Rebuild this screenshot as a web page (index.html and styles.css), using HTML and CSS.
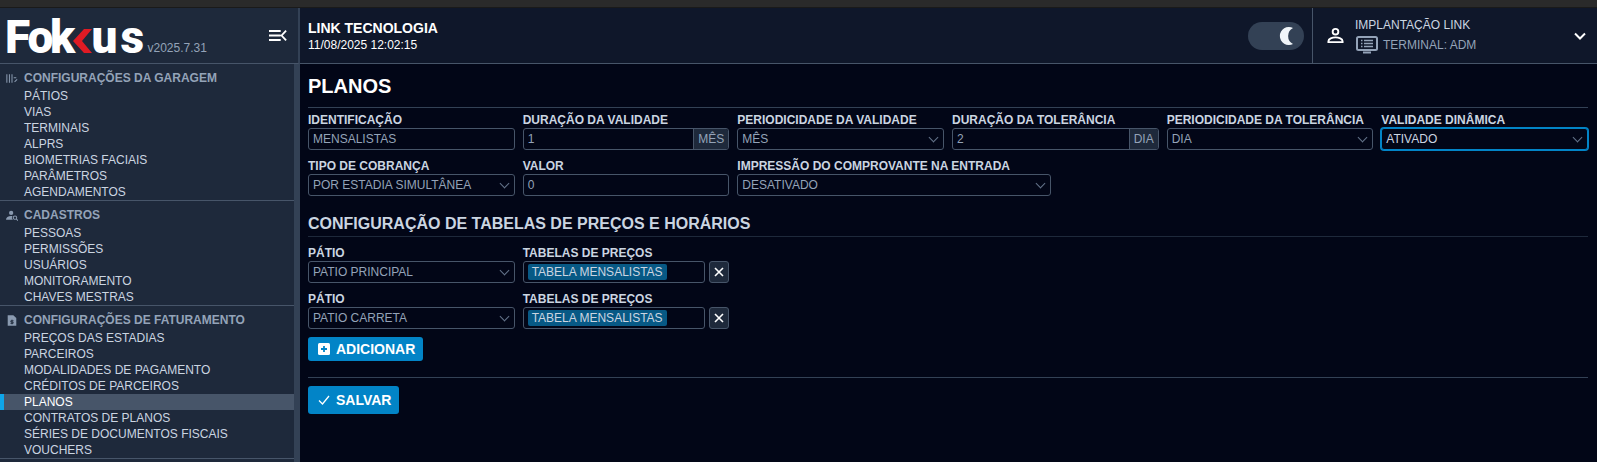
FILE: index.html
```html
<!DOCTYPE html>
<html lang="pt-BR">
<head>
  <meta charset="UTF-8" />
  <title>Fokus - Planos</title>
  <link rel="stylesheet" href="styles.css">
</head>
<body>
  <div class="browser-strip"></div>
  <div class="app">
    <!-- Sidebar -->
    <aside class="sidebar">
      <div class="brand">
        <div class="logo"><span class="logo-f">F</span><span class="logo-o">o</span><span class="logo-k">k</span><svg class="logo-chevron" viewBox="0 0 19 24"><path d="M19 0H11L0 12l11 12h8L9 12z" fill="#e01b24"/></svg><span class="logo-u">u</span><span class="logo-s">s</span></div>
        <span class="version">v2025.7.31</span>
        <svg class="menu-toggle" viewBox="0 0 20 14" fill="none" stroke="#fff" stroke-width="2"><path d="M0 2h13M0 7h13M0 12h13M19 1.500l-5 5.500 5 5.500"/></svg>
      </div>
      <nav class="menu">
        <div class="menu-group">
          <div class="menu-title">
            <svg viewBox="0 0 14 12" fill="none" stroke="#8a9ab0" stroke-width="1.200"><path d="M1 1v10M4 1v10M7 1v10M9 5h3M10 10l3-3"/></svg>
            CONFIGURAÇÕES DA GARAGEM
          </div>
          <a class="menu-item">PÁTIOS</a>
          <a class="menu-item">VIAS</a>
          <a class="menu-item">TERMINAIS</a>
          <a class="menu-item">ALPRS</a>
          <a class="menu-item">BIOMETRIAS FACIAIS</a>
          <a class="menu-item">PARÂMETROS</a>
          <a class="menu-item">AGENDAMENTOS</a>
        </div>
        <div class="menu-group">
          <div class="menu-title">
            <svg viewBox="0 0 14 12" fill="#8a9ab0"><circle cx="6" cy="3" r="2.500"/><path d="M0 11c0-3 2.500-4.500 6-4.500.6 0 1 0 1.500.1A3.500 3.500 0 0 0 8 11z"/><circle cx="10.500" cy="8.500" r="2" fill="none" stroke="#8a9ab0" stroke-width="1.200"/><path d="M12 10l2 2" stroke="#8a9ab0" stroke-width="1.200"/></svg>
            CADASTROS
          </div>
          <a class="menu-item">PESSOAS</a>
          <a class="menu-item">PERMISSÕES</a>
          <a class="menu-item">USUÁRIOS</a>
          <a class="menu-item">MONITORAMENTO</a>
          <a class="menu-item">CHAVES MESTRAS</a>
        </div>
        <div class="menu-group">
          <div class="menu-title">
            <svg viewBox="0 0 14 12" fill="#8a9ab0"><path d="M2 0H8.500L12 3v9H2z"/><path d="M7 5v5.500M8.800 6.300H5.700v1.500h2.600v1.500H5.200" fill="none" stroke="#1e293b"/></svg>
            CONFIGURAÇÕES DE FATURAMENTO
          </div>
          <a class="menu-item">PREÇOS DAS ESTADIAS</a>
          <a class="menu-item">PARCEIROS</a>
          <a class="menu-item">MODALIDADES DE PAGAMENTO</a>
          <a class="menu-item">CRÉDITOS DE PARCEIROS</a>
          <a class="menu-item active">PLANOS</a>
          <a class="menu-item">CONTRATOS DE PLANOS</a>
          <a class="menu-item">SÉRIES DE DOCUMENTOS FISCAIS</a>
          <a class="menu-item">VOUCHERS</a>
        </div>
      </nav>
    </aside>

    <div class="main">
      <!-- Top bar -->
      <header class="topbar">
        <div class="company">
          <strong>LINK TECNOLOGIA</strong>
          <span>11/08/2025 12:02:15</span>
        </div>
        <div class="theme-toggle">
          <svg viewBox="0 0 14 18"><path d="M14 1A9 9 0 1 0 14 17 9 9 0 0 1 14 1z" fill="#f1f5f9"/></svg>
        </div>
        <div class="user">
          <svg class="user-icon" viewBox="0 0 18 18" fill="none" stroke="#fff" stroke-width="2"><circle cx="9" cy="5" r="3"/><path d="M1.500 16v-1c0-2.500 4-4 7.500-4s7.500 1.500 7.500 4v1z"/></svg>
          <div class="user-info">
            <div class="user-name">IMPLANTAÇÃO LINK</div>
            <div class="user-terminal">
              <svg viewBox="0 0 22 18" fill="none" stroke="#94a3b8" stroke-width="2"><rect x="1" y="1" width="20" height="13" rx="1.500"/><path d="M5 4.500h1.500M8 4.500h9M5 7.500h1.500M8 7.500h9M5 10.500h1.500M8 10.500h9" stroke-width="1.300"/><path d="M7 16.500h8"/></svg>
              TERMINAL: ADM
            </div>
          </div>
          <svg class="user-caret" viewBox="0 0 12 8" fill="none" stroke="#fff" stroke-width="2"><path d="M1 1.500l5 5 5-5"/></svg>
        </div>
      </header>

      <main class="content">
        <h1>PLANOS</h1>
        <div class="form-grid">
          <div class="field">
            <label>IDENTIFICAÇÃO</label>
            <div class="control">MENSALISTAS</div>
          </div>
          <div class="field">
            <label>DURAÇÃO DA VALIDADE</label>
            <div class="control addon-group"><span class="value">1</span><span class="addon">MÊS</span></div>
          </div>
          <div class="field">
            <label>PERIODICIDADE DA VALIDADE</label>
            <div class="control select">MÊS</div>
          </div>
          <div class="field">
            <label>DURAÇÃO DA TOLERÂNCIA</label>
            <div class="control addon-group"><span class="value">2</span><span class="addon">DIA</span></div>
          </div>
          <div class="field">
            <label>PERIODICIDADE DA TOLERÂNCIA</label>
            <div class="control select">DIA</div>
          </div>
          <div class="field">
            <label>VALIDADE DINÂMICA</label>
            <div class="control select focused">ATIVADO</div>
          </div>
          <div class="field">
            <label>TIPO DE COBRANÇA</label>
            <div class="control select">POR ESTADIA SIMULTÂNEA</div>
          </div>
          <div class="field">
            <label>VALOR</label>
            <div class="control">0</div>
          </div>
          <div class="field span-3">
            <label>IMPRESSÃO DO COMPROVANTE NA ENTRADA</label>
            <div class="control select">DESATIVADO</div>
          </div>
        </div>

        <h2>CONFIGURAÇÃO DE TABELAS DE PREÇOS E HORÁRIOS</h2>
        <div class="form-grid">
          <div class="field">
            <label>PÁTIO</label>
            <div class="control select">PATIO PRINCIPAL</div>
          </div>
          <div class="field">
            <label>TABELAS DE PREÇOS</label>
            <div class="tag-row">
              <div class="control tags"><span class="tag">TABELA MENSALISTAS</span></div>
              <button class="remove"><svg viewBox="0 0 10 10" fill="none" stroke="#fff" stroke-width="1.600"><path d="M1 1l8 8M9 1l-8 8"/></svg></button>
            </div>
          </div>
          <div class="field first-col">
            <label>PÁTIO</label>
            <div class="control select">PATIO CARRETA</div>
          </div>
          <div class="field">
            <label>TABELAS DE PREÇOS</label>
            <div class="tag-row">
              <div class="control tags"><span class="tag">TABELA MENSALISTAS</span></div>
              <button class="remove"><svg viewBox="0 0 10 10" fill="none" stroke="#fff" stroke-width="1.600"><path d="M1 1l8 8M9 1l-8 8"/></svg></button>
            </div>
          </div>
        </div>

        <button class="btn btn-add">
          <svg viewBox="0 0 12 12"><rect width="12" height="12" rx="1.500" fill="#fff"/><path d="M6 3v6M3 6h6" stroke="#0284c7" stroke-width="1.800"/></svg>
          ADICIONAR
        </button>
        <hr>
        <button class="btn btn-save">
          <svg viewBox="0 0 12 10" fill="none" stroke="#fff" stroke-width="1.300"><path d="M1 5.500l3.500 3.500L11 1"/></svg>
          SALVAR
        </button>
      </main>
    </div>
  </div>
</body>
</html>
```

FILE: styles.css
```css
* {
  box-sizing: border-box;
}
html, body {
  height: 100%;
}
body {
  margin: 0;
  background: #020617;
  color: #cbd5e1;
  font-family: "Liberation Sans", Arial, sans-serif;
  font-size: 12px;
  overflow: hidden;
}
.browser-strip {
  height: 8px;
  background: #2a2a2a;
  border-bottom: 1px solid #1a1a1a;
}
.app {
  display: flex;
  height: 454px;
}

/* Sidebar */
.sidebar {
  width: 300px;
  flex: none;
  background: #1e293b;
  border-right: 6px solid #334155;
  position: relative;
  overflow: visible;
}
.brand {
  height: 56px;
  width: 300px;
  background: #1e293b;
  border-bottom: 1px solid #475569;
  border-right: 2px solid #334155;
  display: flex;
  align-items: flex-end;
  padding: 0 0 9px 5px;
  position: relative;
  z-index: 1;
}
.logo {
  display: flex;
  align-items: baseline;
  height: 34px;
  color: #fff;
  font-family: Roboto, sans-serif;
  font-weight: 900;
  font-size: 46px;
  line-height: 34px;
}
.logo-f,
.logo-o {
  width: 22.500px;
  letter-spacing: -5px;
}
.logo-k {
  width: 23px;
  letter-spacing: -5px;
}
.logo-chevron {
  width: 19px;
  height: 24px;
}
.logo-u {
  width: 29px;
  margin-left: -0.500px;
}
.logo-s {
  width: 27px;
}
.version {
  color: #94a3b8;
  font-size: 12px;
  margin-bottom: -1px;
}
.menu-toggle {
  position: absolute;
  right: 11px;
  top: 21px;
  width: 18px;
  height: 13px;
}
.menu {
  height: 398px;
  overflow: hidden;
}
.menu-group {
  border-bottom: 1px solid #475569;
  padding-top: 6px;
}
.menu-title {
  display: flex;
  align-items: center;
  gap: 6px;
  height: 16px;
  padding-left: 6px;
  margin-bottom: 2px;
  color: #94a3b8;
  font-weight: 700;
}
.menu-title svg {
  width: 12px;
  height: 11px;
  flex: none;
}
.menu-item {
  display: block;
  height: 16px;
  line-height: 16px;
  padding-left: 24px;
  color: #cbd5e1;
}
.menu-item.active {
  background: #475569;
  color: #fff;
  border-left: 4px solid #0ea5e9;
  padding-left: 20px;
}

/* Top bar */
.main {
  flex: 1;
  min-width: 0;
}
.topbar {
  height: 56px;
  background: #0f172a;
  border-bottom: 1px solid #475569;
  display: flex;
  align-items: center;
}
.company {
  flex: 1;
  padding: 2px 0 0 8px;
  color: #fff;
  line-height: 17px;
}
.company strong {
  display: block;
  font-size: 14px;
}
.theme-toggle {
  width: 56px;
  height: 28px;
  margin-right: 8px;
  border-radius: 14px;
  background: #334155;
  display: flex;
  align-items: center;
  justify-content: flex-end;
  padding-right: 11px;
}
.theme-toggle svg {
  width: 14px;
  height: 18px;
}
.user {
  width: 285px;
  height: 100%;
  border-left: 1px solid #475569;
  display: flex;
  align-items: center;
  padding-left: 14px;
  position: relative;
}
.user-icon {
  width: 17px;
  height: 17px;
  flex: none;
}
.user-info {
  margin-left: 11px;
}
.user-name {
  color: #cbd5e1;
  line-height: 14px;
}
.user-terminal {
  display: flex;
  align-items: center;
  gap: 5px;
  color: #94a3b8;
  margin-top: 4px;
}
.user-terminal svg {
  width: 22px;
  height: 18px;
  margin-left: 1px;
}
.user-caret {
  width: 12px;
  height: 8px;
  position: absolute;
  right: 11px;
  top: 24px;
}

/* Content */
.content {
  padding: 0 9px 0 8px;
}
h1 {
  margin: 0;
  height: 44px;
  line-height: 44px;
  font-size: 20px;
  color: #fff;
  border-bottom: 1px solid #334155;
}
h2 {
  margin: 11px 0 4px;
  height: 26px;
  line-height: 26px;
  font-size: 16px;
  color: #cbd5e1;
  border-bottom: 1px solid #1e293b;
}
.form-grid {
  display: grid;
  grid-template-columns: repeat(12, 1fr);
  gap: 0 8px;
}
.field {
  grid-column: span 2;
  height: 46px;
  padding-top: 4px;
}
.field.span-3 {
  grid-column: span 3;
}
.field.first-col {
  grid-column: 1 / span 2;
}
label {
  display: block;
  height: 16px;
  line-height: 17px;
  font-weight: 700;
  color: #cbd5e1;
}
.control {
  height: 22px;
  line-height: 20px;
  padding: 0 4px;
  background: #020617;
  border: 1px solid #475569;
  border-radius: 3px;
  color: #94a3b8;
  position: relative;
}
.select::after {
  content: "";
  position: absolute;
  right: 6px;
  top: 5px;
  width: 6px;
  height: 6px;
  border-right: 1px solid #64748b;
  border-bottom: 1px solid #64748b;
  transform: rotate(45deg);
}
.focused {
  border: 1px solid #0284c7;
  box-shadow: 0 0 0 1px #0284c7;
  color: #cbd5e1;
}
.addon-group {
  display: flex;
  padding: 0;
  overflow: hidden;
}
.value {
  flex: 1;
  padding-left: 4px;
  border-right: 1px solid #475569;
}
.addon {
  padding: 0 4px;
  text-align: center;
  background: #1e293b;
}
.tag-row {
  display: flex;
  gap: 4px;
}
.tags {
  flex: 1;
  padding: 2px 4px;
  line-height: 16px;
}
.tag {
  display: inline-block;
  height: 16px;
  padding: 0 4px;
  background: #075985;
  border-radius: 2px;
  color: #cbd5e1;
}
.remove {
  width: 20px;
  height: 22px;
  padding: 0;
  border: 1px solid #475569;
  border-radius: 3px;
  background: #1e293b;
  display: flex;
  align-items: center;
  justify-content: center;
}
.remove svg {
  width: 10px;
  height: 10px;
}
.btn {
  display: flex;
  align-items: center;
  border: none;
  border-radius: 3px;
  background: #0284c7;
  color: #fff;
  font-family: inherit;
  font-weight: 700;
  font-size: 14px;
  padding: 0 7px 0 10px;
}
.btn-add {
  height: 24px;
  width: 115px;
  gap: 6px;
  margin-top: 4px;
}
.btn-add svg {
  width: 12px;
  height: 12px;
}
.btn-save {
  height: 28px;
  width: 91px;
  gap: 6px;
}
.btn-save svg {
  width: 12px;
  height: 10px;
}
hr {
  border: none;
  border-top: 1px solid #334155;
  margin: 16px 0 8px;
}
```
